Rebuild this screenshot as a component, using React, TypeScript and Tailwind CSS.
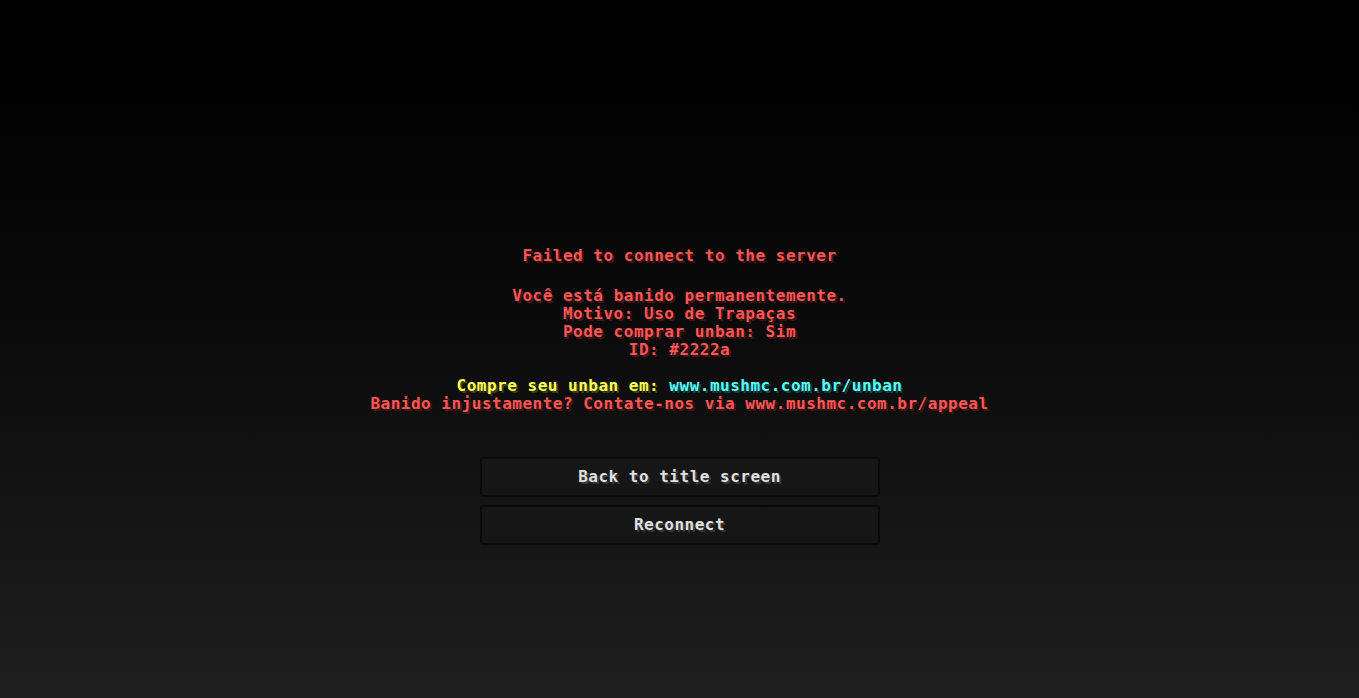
const font = { fontFamily: '"DejaVu Sans Mono", "Liberation Mono", monospace' };

const MenuButton = ({ label }: { label: string }) => (
  <button className="w-[400px] h-[40px] rounded-[3px] border-2 border-[#0a0a0a] bg-[#161616] text-[#e0e0e0] text-[16px] leading-[20px] tracking-[0.5px] font-bold [text-shadow:2px_2px_0_#383838]">
    {label}
  </button>
);

export default function App() {
  return (
    <div
      className="w-full h-[698px] bg-gradient-to-b from-[#010101] to-[#1f1f1f] flex flex-col items-center pt-[246px] text-[16px] tracking-[0.5px] font-bold"
      style={font}
    >
      <p className="leading-[20px] text-[#ff5555] [text-shadow:2px_2px_0_#3f1515]">
        Failed to connect to the server
      </p>
      <div className="mt-[21px] flex flex-col items-center leading-[18px] text-[#ff5555] [text-shadow:2px_2px_0_#3f1515]">
        <p>Você está banido permanentemente.</p>
        <p>Motivo: Uso de Trapaças</p>
        <p>Pode comprar unban: Sim</p>
        <p>ID: #2222a</p>
        <p className="h-[18px]"></p>
        <p>
          <span className="text-[#ffff55] [text-shadow:2px_2px_0_#3f3f15]">Compre seu unban em: </span>
          <span className="text-[#55ffff] [text-shadow:2px_2px_0_#153f3f]">www.mushmc.com.br/unban</span>
        </p>
        <p>Banido injustamente? Contate-nos via www.mushmc.com.br/appeal</p>
      </div>
      <div className="mt-[44px] flex flex-col gap-2">
        <MenuButton label="Back to title screen" />
        <MenuButton label="Reconnect" />
      </div>
    </div>
  );
}
